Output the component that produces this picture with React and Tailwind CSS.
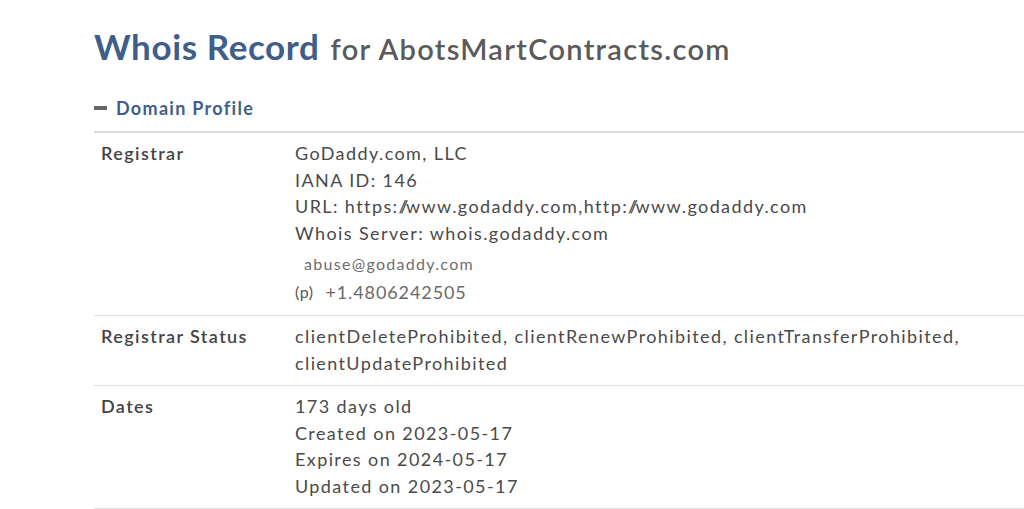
import React from 'react';

const Slashes = () => <span className="tracking-[-2.4px]">//</span>;

const rows = [
  {
    label: 'Registrar',
    lines: [
      'GoDaddy.com, LLC',
      'IANA ID: 146',
      <>URL: https:<Slashes />www.godaddy.com,http:<Slashes />www.godaddy.com</>,
      'Whois Server: whois.godaddy.com',
    ],
    contact: true,
  },
  {
    label: 'Registrar Status',
    lines: [
      'clientDeleteProhibited, clientRenewProhibited, clientTransferProhibited,',
      'clientUpdateProhibited',
    ],
  },
  {
    label: 'Dates',
    lines: ['173 days old', 'Created on 2023-05-17', 'Expires on 2024-05-17', 'Updated on 2023-05-17'],
  },
];

const App = () => {
  return (
    <div className="w-[1024px] h-[509px] bg-white overflow-hidden pl-[94px] font-['Lato','Open_Sans',sans-serif]">
      <h1 className="pt-[22px] leading-[48px] whitespace-nowrap">
        <span className="text-[35px] font-bold text-[#3f5f8a] tracking-[0.6px]">Whois Record</span>
        <span className="text-[29px] font-semibold text-[#5a5a5a] ml-[11px] tracking-[1.3px]">for AbotsMartContracts.com</span>
      </h1>

      <div className="mt-[17px] flex items-center gap-[9px] text-[18px] font-bold text-[#3f5f8a] leading-[26px] tracking-[1.3px]">
        <span className="w-[13px] h-[4px] bg-[#666]" />
        <span>Domain Profile</span>
      </div>

      <div className="mt-[10px] border-t-2 border-[#dcdcdc]">
        {rows.map((row) => (
          <div key={row.label} className="flex border-b border-[#dedede] pt-[7px] pb-[9px] text-[18px] leading-[26.5px] tracking-[1.4px]">
            <div className="w-[201px] shrink-0 pl-[7px] font-semibold text-[#444] tracking-[1.4px]">{row.label}</div>
            <div className="text-[#4a4a4a] whitespace-nowrap">
              {row.lines.map((l, i) => (
                <div key={i}>{l}</div>
              ))}
              {row.contact && (
                <div>
                  <div className="pl-[9px] pt-[4px] text-[16px] leading-[28px] tracking-[1.3px] text-[#6e6e6e]">abuse@godaddy.com</div>
                  <div className="flex items-center leading-[28px]">
                    <span className="text-[16px] tracking-[0.5px] text-[#555]">(p)</span>
                    <span className="ml-[12px] text-[18px] tracking-[0.9px] text-[#6a6a6a]">+1.4806242505</span>
                  </div>
                </div>
              )}
            </div>
          </div>
        ))}
      </div>
    </div>
  );
};

export default App;
